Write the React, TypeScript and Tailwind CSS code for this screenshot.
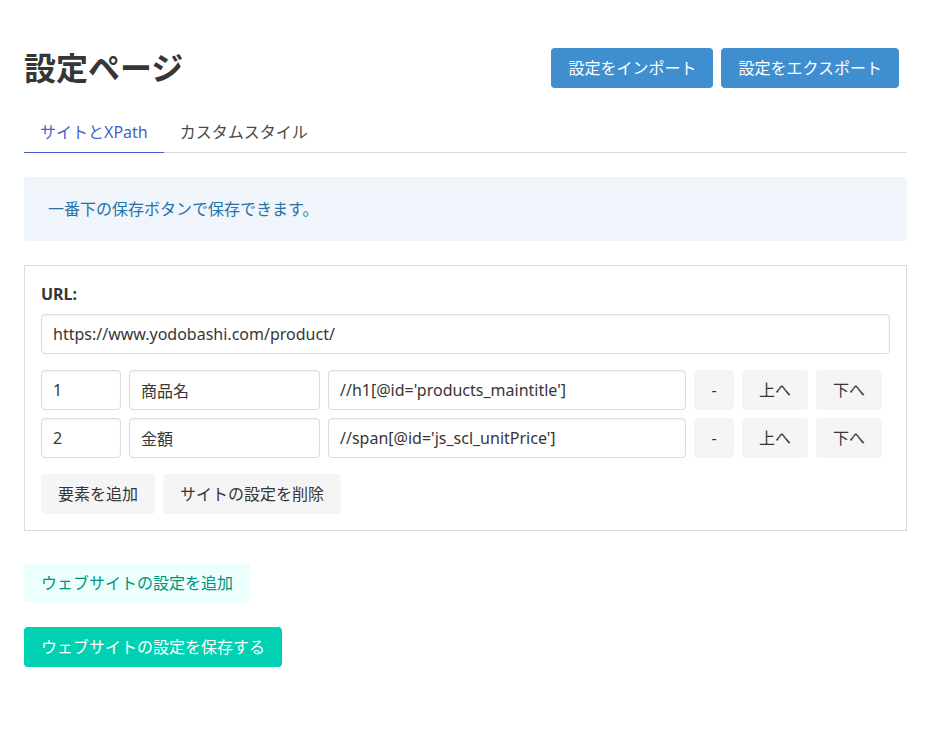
import React, { useState } from 'react';

const rows = [
    { order: '1', name: '商品名', xpath: "//h1[@id='products_maintitle']" },
    { order: '2', name: '金額', xpath: "//span[@id='js_scl_unitPrice']" },
];

const inputCls = 'h-10 rounded-[4px] border border-[#dbdbdb] bg-white px-[11px] text-base text-[#363636] shadow-[inset_0_1px_2px_rgba(10,10,10,0.05)] outline-none';
const lightBtn = 'h-10 rounded-[4px] bg-[#f5f5f5] px-[17px] text-base text-[#363636] whitespace-nowrap';

const App: React.FC = () => {
    const [tab, setTab] = useState(0);

    return (
        <div className="min-h-screen bg-white px-6 pt-12 pb-16 text-[#4a4a4a] font-['Noto_Sans','Noto_Sans_CJK_JP',sans-serif]">
            <header className="flex items-center justify-between">
                <h1 className="text-[32px] font-bold leading-10 text-[#363636]">設定ページ</h1>
                <div className="mr-2 flex gap-2">
                    <button className="h-10 rounded-[4px] bg-[#3e8ed0] px-[17px] text-base text-white">設定をインポート</button>
                    <button className="h-10 rounded-[4px] bg-[#3e8ed0] px-[17px] text-base text-white">設定をエクスポート</button>
                </div>
            </header>

            <nav className="mt-6 flex border-b border-[#dbdbdb]">
                {['サイトとXPath', 'カスタムスタイル'].map((t, i) => (
                    <button
                        key={t}
                        onClick={() => setTab(i)}
                        className={`-mb-px h-[41px] border-b px-4 text-base ${tab === i ? 'border-[#485fc7] text-[#485fc7]' : 'border-transparent text-[#4a4a4a]'}`}
                    >
                        {t}
                    </button>
                ))}
            </nav>

            <div className="mt-6 rounded-[4px] bg-[#eff5fb] px-6 py-5 text-base leading-6 text-[#296fa8]">
                一番下の保存ボタンで保存できます。
            </div>

            <section className="mt-6 border border-[#dbdbdb] p-4">
                <label className="mb-2 block text-base font-bold leading-6 text-[#363636]">URL:</label>
                <input className={`${inputCls} w-full`} defaultValue="https://www.yodobashi.com/product/" />

                <div className="mt-4 flex flex-col gap-2">
                    {rows.map(r => (
                        <div key={r.order} className="flex gap-2">
                            <input className={`${inputCls} w-[80px]`} defaultValue={r.order} />
                            <input className={`${inputCls} w-[191px]`} defaultValue={r.name} />
                            <input className={`${inputCls} w-[358px]`} defaultValue={r.xpath} />
                            <button className={`${lightBtn} w-10 px-0`}>-</button>
                            <button className={`${lightBtn} w-[66px] px-0`}>上へ</button>
                            <button className={`${lightBtn} w-[66px] px-0`}>下へ</button>
                        </div>
                    ))}
                </div>

                <div className="mt-4 flex gap-2">
                    <button className={lightBtn}>要素を追加</button>
                    <button className={lightBtn}>サイトの設定を削除</button>
                </div>
            </section>

            <div className="mt-8 flex flex-col items-start gap-6">
                <button className="h-10 rounded-[4px] bg-[#ebfffc] px-[17px] text-base text-[#00947e]">ウェブサイトの設定を追加</button>
                <button className="h-10 rounded-[4px] bg-[#00d1b2] px-[17px] text-base text-white">ウェブサイトの設定を保存する</button>
            </div>
        </div>
    );
};

export default App;
